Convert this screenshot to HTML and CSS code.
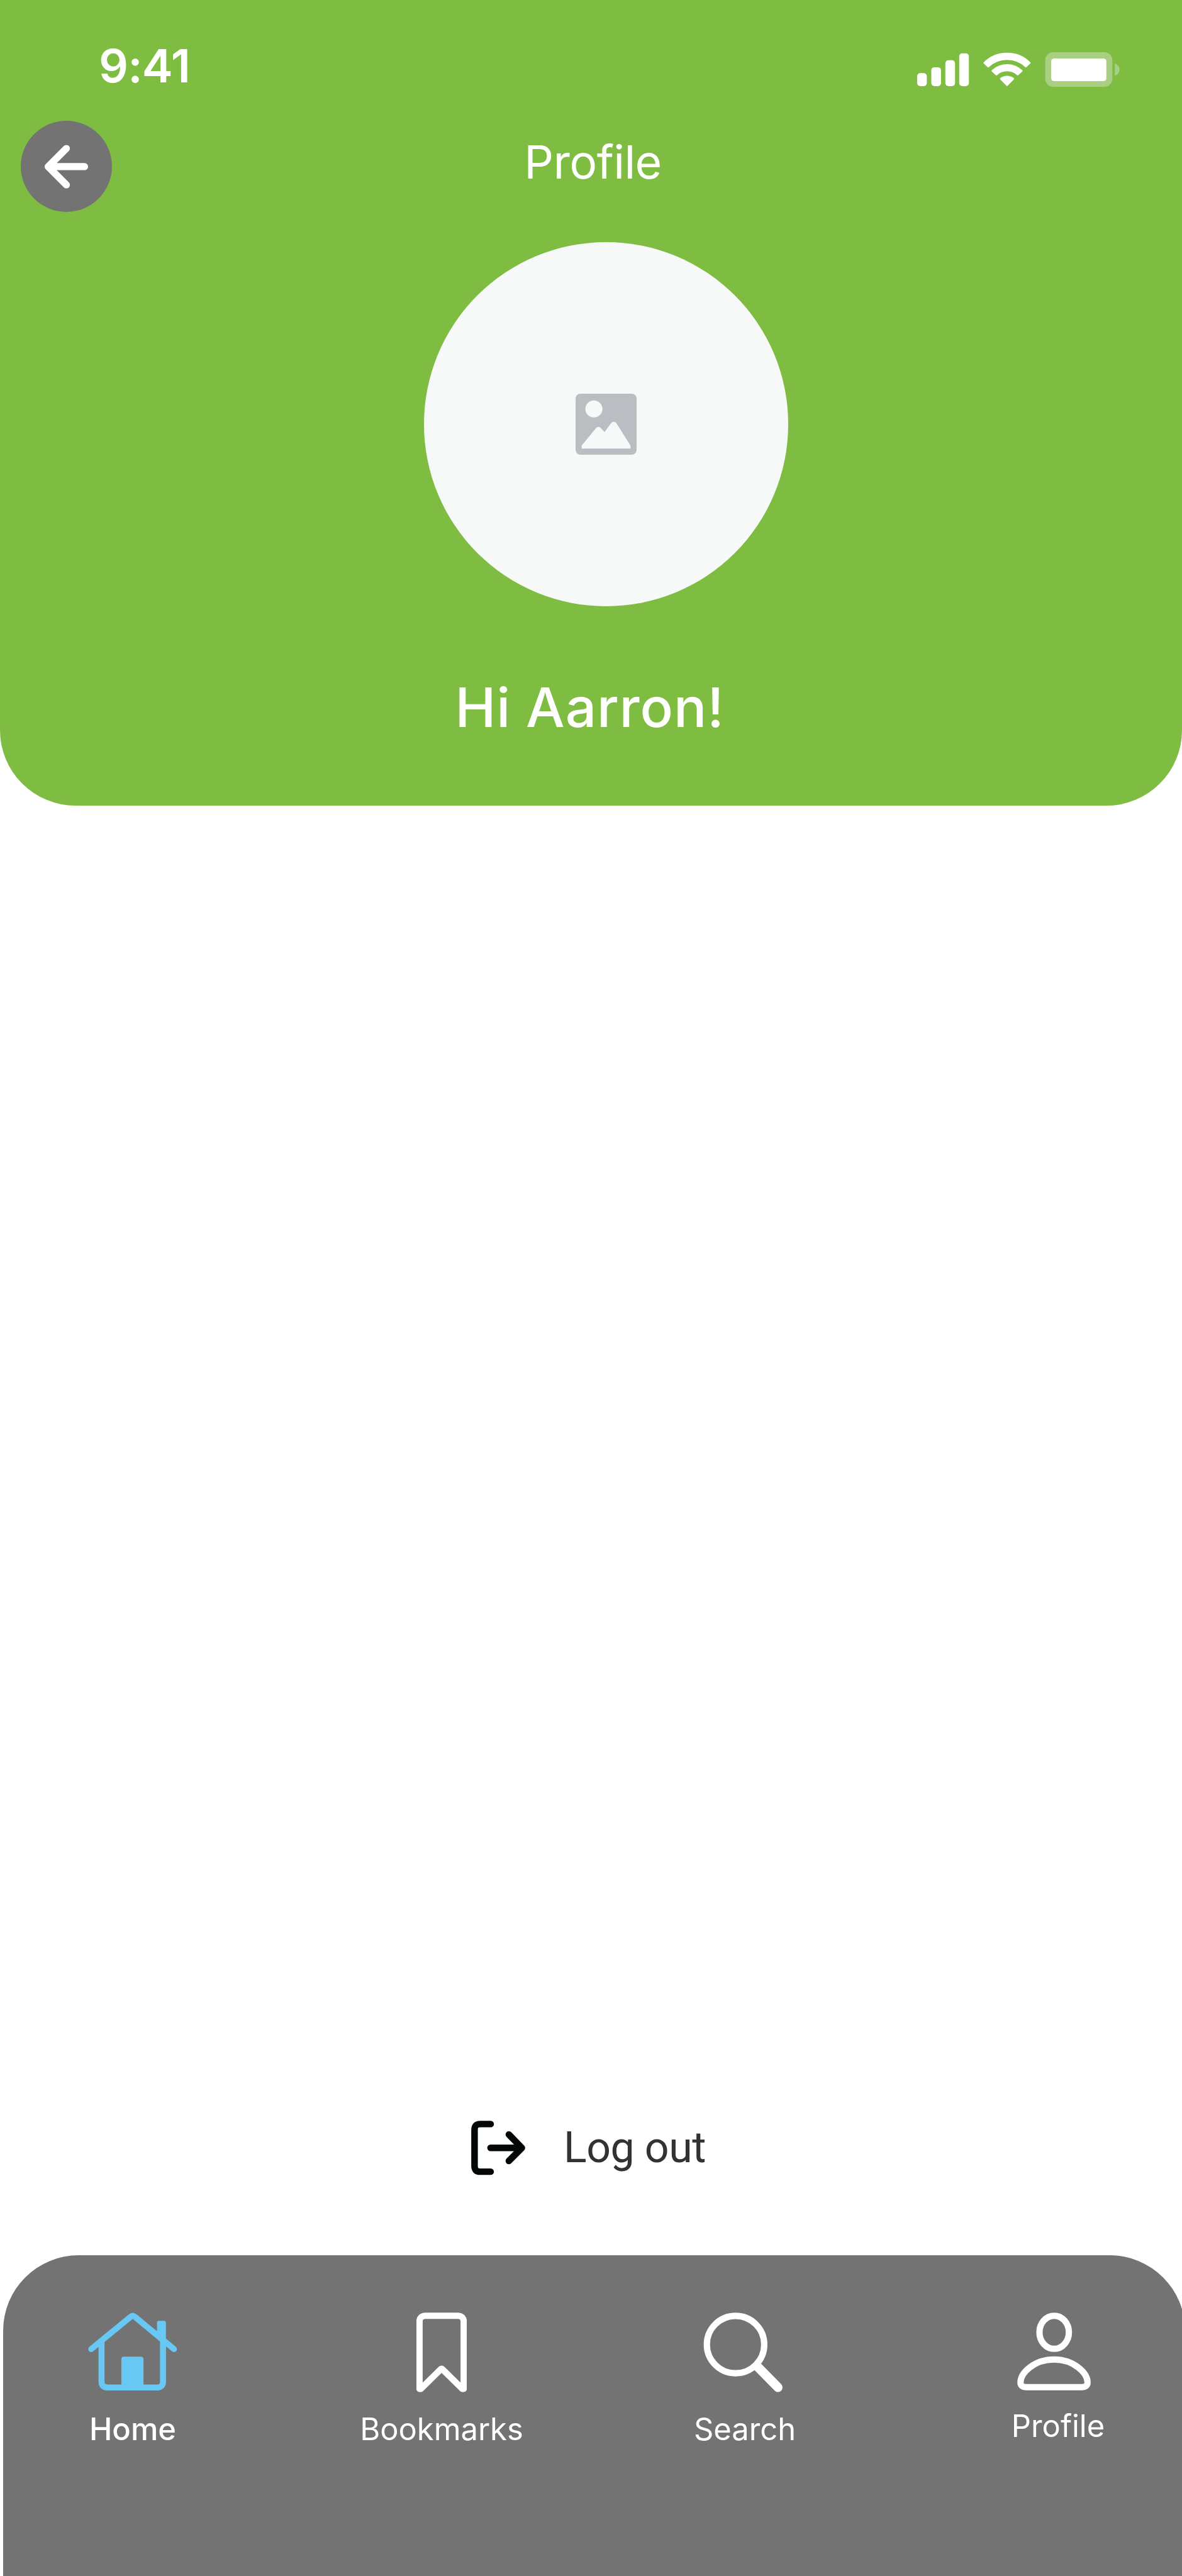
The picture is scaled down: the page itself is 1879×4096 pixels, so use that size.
FILE: index.html
```html
<!DOCTYPE html>
<html lang="en">
<head>
  <meta charset="UTF-8" />
  <meta name="viewport" content="width=device-width, initial-scale=1" />
  <title>Profile</title>
  <link rel="stylesheet" href="styles.css">
</head>
<body>
  <div class="screen">
    <header class="header">
      <!-- Status bar -->
      <div class="status-bar">
        <span class="time">9:41</span>
        <svg class="status-icons" viewBox="0 0 330 58">
          <rect x="1" y="35" width="15.7" height="21" rx="5" />
          <rect x="24" y="25.3" width="15.7" height="30.7" rx="5" />
          <rect x="46.8" y="14" width="15.7" height="42" rx="5" />
          <rect x="69.3" y="2.7" width="15.7" height="53.3" rx="5" />
          <g class="wifi">
            <path d="M110.2 18.2 A52.8 52.8 0 0 1 183.8 18.2 L177.5 24 A44.5 44.5 0 0 0 116.5 24 Z" />
            <path d="M123.3 31.2 A34.6 34.6 0 0 1 170.7 31.2 L164.3 37 A25.5 25.5 0 0 0 129.7 37 Z" />
            <path d="M137 44 A16.8 16.8 0 0 1 157 44 L147 54.3 Z" />
          </g>
          <rect class="battery-case" x="209" y="1" width="109" height="56" rx="13" />
          <rect x="218.7" y="11" width="89.6" height="37" rx="5" />
          <path class="battery-case" d="M322 19 Q329.5 22 329.5 29 Q329.5 36.5 322 39.5 Z" />
        </svg>
      </div>

      <!-- Title row -->
      <div class="title-bar">
        <button class="back-btn" aria-label="Back">
          <svg viewBox="0 0 148 148">
            <path d="M103.5 74.5H45M74 45L44.5 74.5L74 104" />
          </svg>
        </button>
        <h1>Profile</h1>
      </div>

      <div class="avatar">
        <svg viewBox="0 0 20 20">
          <rect width="20" height="20" rx="1.6" fill="#bbbdc2" />
          <circle cx="6" cy="5" r="2.8" fill="#f7f9f9" />
          <path d="M2 18V17L6.6 11.4Q7.5 10.4 8.4 11.4L9.5 12.6L11.6 9.7Q12.5 8.6 13.4 9.7L18 17V18Z" fill="#f7f9f9" />
        </svg>
      </div>
      <h2 class="greeting">Hi Aarron!</h2>
    </header>

    <main class="content">
      <a class="logout">
        <svg viewBox="0 0 89 89">
          <path d="M31.7 5.5H14.5Q5.5 5.5 5.5 14.5V74Q5.5 83 14.5 83H31.7" />
          <path d="M31.5 44.3H81M61.3 22.5L82.5 44.3L61.3 65.5" />
        </svg>
        <span>Log out</span>
      </a>
    </main>

    <!-- Bottom navigation -->
    <nav class="bottom-nav">
      <a class="nav-item active">
        <svg class="icon-home" viewBox="0 0 145 130">
          <path class="line" d="M5 59.5L69 7Q72.5 4 76 7L139.5 59.5" />
          <path class="line" d="M21.7 46V112Q21.7 122 31.7 122H112.3Q121.8 122 121.8 112V46" />
          <path d="M112 34V16.5Q112 13.5 115 13.5H123.5Q126.5 13.5 126.5 16.5V46Z" />
          <path d="M54 124V76Q54 72 58 72H86Q90 72 90 76V124Z" />
        </svg>
        <span>Home</span>
      </a>
      <a class="nav-item">
        <svg class="icon-bookmark" viewBox="0 0 82 130">
          <path class="line" d="M5 124.5V15Q5 5.3 15 5.3H67Q77 5.3 77 15V124.5H75L42.5 92.5Q41 91 39.5 92.5L7 124.5Z" />
        </svg>
        <span>Bookmarks</span>
      </a>
      <a class="nav-item">
        <svg class="icon-search" viewBox="0 0 130 130">
          <circle class="line" cx="52.5" cy="52.2" r="46.7" />
          <path class="line handle" d="M88 88L121.5 122" />
        </svg>
        <span>Search</span>
      </a>
      <a class="nav-item user">
        <svg class="icon-user" viewBox="0 0 120 130">
          <ellipse class="line" cx="60.3" cy="32.2" rx="24" ry="27" />
          <path class="line" d="M5.4 114C5.4 98 28 76.6 60 76.6S114.7 98 114.7 114Q114.7 121.6 105 121.6H15Q5.4 121.6 5.4 114Z" />
        </svg>
        <span>Profile</span>
      </a>
    </nav>
  </div>
</body>
</html>
```
FILE: styles.css
```css
/* Global Styles */
* {
  box-sizing: border-box;
}
body {
  margin: 0;
  background: #fff;
  font-family: 'Inter', sans-serif;
  color: #fff;
}
.screen {
  display: flex;
  flex-direction: column;
  height: 4096px;
  overflow: hidden;
}
svg {
  display: block;
  flex: none;
}

/* Header */
.header {
  height: 1281px;
  background: #7fbd42;
  border-radius: 0 0 120px 120px;
}
.status-bar {
  display: flex;
  justify-content: space-between;
  height: 192px;
  padding: 0 99px 0 157px;
}
.time {
  margin-top: 55px;
  font-size: 73.5px;
  font-weight: 600;
  line-height: 100px;
  letter-spacing: -0.8px;
}
.status-icons {
  width: 323px;
  height: 57px;
  margin-top: 82px;
  fill: #fff;
}
.wifi {
  stroke: #fff;
  stroke-width: 3;
  stroke-linejoin: round;
}
.battery-case {
  fill: #a9d082;
  stroke: none;
}

/* Title row */
.title-bar {
  display: grid;
  grid-template-columns: 1fr auto 1fr;
  height: 145px;
}
.back-btn {
  width: 145px;
  height: 145px;
  margin-left: 33px;
  padding: 0;
  border: none;
  border-radius: 50%;
  background: #737373;
}
.back-btn svg {
  width: 145px;
  height: 145px;
  fill: none;
  stroke: #fff;
  stroke-width: 11.5;
  stroke-linecap: round;
  stroke-linejoin: round;
}
h1 {
  margin: 16px 0 0 6px;
  font-size: 73.4px;
  font-weight: 400;
  line-height: 100px;
  letter-spacing: -0.6px;
}

/* Avatar */
.avatar {
  display: flex;
  align-items: center;
  justify-content: center;
  width: 579px;
  height: 579px;
  margin: 48px 0 0 674px;
  border-radius: 50%;
  background: #f7f9f9;
}
.avatar svg {
  width: 97px;
  height: 97px;
}
.greeting {
  margin: 101px 4px 0 0;
  font-size: 87px;
  font-weight: 500;
  line-height: 120px;
  letter-spacing: 0.9px;
  text-align: center;
}

/* Content */
.content {
  display: flex;
  flex: 1;
  align-items: flex-end;
  padding: 0 0 127px 749px;
}
.logout {
  display: flex;
  align-items: center;
  gap: 60px;
  color: #333230;
  font-family: 'Roboto', sans-serif;
  font-size: 68px;
  line-height: 87px;
  letter-spacing: -0.4px;
}
.logout svg {
  width: 87px;
  height: 87px;
  fill: none;
  stroke: #030707;
  stroke-width: 10.7;
  stroke-linecap: round;
  stroke-linejoin: round;
}

/* Bottom navigation */
.bottom-nav {
  display: grid;
  grid-template-columns: 491px 482px 498px 294px;
  width: 1879px;
  height: 510px;
  margin-left: 5px;
  padding: 91px 0 0 59px;
  border-radius: 120px 120px 0 0;
  background: #737373;
}
.nav-item {
  display: flex;
  flex-direction: column;
  align-items: center;
  width: 294px;
  font-size: 48.9px;
  line-height: 60px;
}
.nav-item svg {
  height: 127px;
  margin-bottom: 29px;
  fill: #fff;
}
.nav-item .line {
  fill: none;
  stroke: #fff;
  stroke-width: 10.3;
  stroke-linecap: round;
  stroke-linejoin: round;
}
.nav-item .handle {
  stroke-width: 15;
}
.nav-item.active {
  font-weight: 500;
}
.nav-item.active svg {
  fill: #68c8f3;
}
.nav-item.active .line {
  stroke: #68c8f3;
  stroke-width: 9.8;
}
.nav-item.user svg {
  margin: 0 14px 24px 0;
}
.icon-home {
  width: 142px;
}
.icon-bookmark {
  width: 80px;
}
.nav-item .icon-search {
  width: 127px;
  margin-right: 5px;
}
.icon-user {
  width: 117px;
}
```
